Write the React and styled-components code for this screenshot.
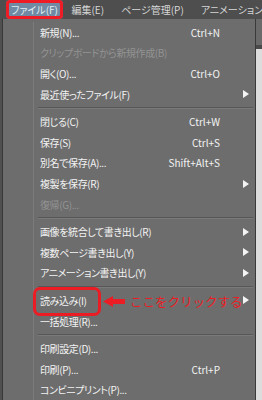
import React from "react";
import styled, { createGlobalStyle } from "styled-components";

const GlobalStyle = createGlobalStyle`
  html, body {
    margin: 0;
    padding: 0;
    background: #4c4c4c;
  }
  body {
    font-family: "Noto Sans CJK JP", "Noto Sans", sans-serif;
    font-feature-settings: "palt" 1;
  }
`;

const Screen = styled.div`
  width: 262px;
  height: 400px;
  overflow: hidden;
  display: flex;
  flex-direction: column;
  background: #4c4c4c;
`;

const MenuBar = styled.div`
  height: 19px;
  flex: none;
  display: flex;
  align-items: stretch;
  padding-left: 6px;
  background: #4e4e4e;
  white-space: nowrap;
  overflow: hidden;
`;

const BarItem = styled.div`
  display: flex;
  align-items: center;
  flex: none;
  padding: ${({ active }) => (active ? "0 5px" : "0 8.5px")};
  font-size: 10px;
  color: ${({ active }) => (active ? "#e4edf4" : "#d6d6d6")};
  background: ${({ active }) => (active ? "#6f8aa2" : "transparent")};
  border-radius: ${({ active }) => (active ? "4px" : "0")};
  box-shadow: ${({ active }) => (active ? "inset 0 0 0 3px #ee1c25" : "none")};
`;

const Body = styled.div`
  flex: 1;
  display: flex;
  min-height: 0;
`;

const LeftStrip = styled.div`
  width: 2px;
  flex: none;
  background: #505050;
  border-right: 1px solid #383838;
`;

const RightStrip = styled.div`
  flex: 1;
  border-left: 1px solid #3a3a3a;
  background: linear-gradient(#6a6a6a 0 26px, #4a4a4a 26px 30px, #dcdcdc 30px);
`;

const Menu = styled.div`
  width: 252px;
  flex: none;
  display: flex;
  background: #6d6d6d;
  padding-top: 3px;
`;

const Gutter = styled.div`
  width: 30px;
  flex: none;
  border-right: 1px solid #7b7b7b;
`;

const ItemList = styled.div`
  flex: 1;
  display: flex;
  flex-direction: column;
`;

const Row = styled.div`
  position: relative;
  height: 21px;
  display: grid;
  grid-template-columns: 1fr auto 35px;
  align-items: center;
  padding-left: 6px;
  font-size: 10px;
  white-space: nowrap;
  color: ${({ disabled }) => (disabled ? "#939393" : "#f3f3f3")};
`;

const Label = styled.span`
  letter-spacing: -0.4px;
`;

const Shortcut = styled.span`
  text-align: right;
`;

const ArrowCell = styled.span`
  display: flex;
  align-items: center;
  padding-left: 23px;
`;

const SubArrow = styled.span`
  width: 0;
  height: 0;
  border-top: 4.5px solid transparent;
  border-bottom: 4.5px solid transparent;
  border-left: 6px solid #f4f4f4;
`;

const Separator = styled.div`
  height: 7px;
  display: flex;
  align-items: center;
  padding: 0 2px 0 4px;

  &::before {
    content: "";
    flex: 1;
    height: 1px;
    background: #575757;
    border-bottom: 1px solid #7a7a7a;
  }
`;

const Callout = styled.div`
  position: absolute;
  left: -1px;
  top: -3px;
  display: flex;
  align-items: center;
  pointer-events: none;
`;

const CalloutBox = styled.div`
  width: 62px;
  height: 23px;
  border: 3px solid #ec1c24;
  border-radius: 7px;
`;

const CalloutText = styled.span`
  margin-left: 5px;
  font-size: 12.5px;
  color: #ec1c24;
  font-feature-settings: normal;
`;

const items = [
  { label: "新規(N)...", shortcut: "Ctrl+N" },
  { label: "クリップボードから新規作成(B)", disabled: true },
  { label: "開く(O)...", shortcut: "Ctrl+O" },
  { label: "最近使ったファイル(F)", sub: true },
  "sep",
  { label: "閉じる(C)", shortcut: "Ctrl+W" },
  { label: "保存(S)", shortcut: "Ctrl+S" },
  { label: "別名で保存(A)...", shortcut: "Shift+Alt+S" },
  { label: "複製を保存(R)", sub: true },
  { label: "復帰(G)...", disabled: true },
  "sep",
  { label: "画像を統合して書き出し(R)", sub: true },
  { label: "複数ページ書き出し(Y)", sub: true },
  { label: "アニメーション書き出し(Y)", sub: true },
  "sep",
  { label: "読み込み(I)", sub: true, callout: "ここをクリックする" },
  { label: "一括処理(R)..." },
  "sep",
  { label: "印刷設定(D)..." },
  { label: "印刷(P)...", shortcut: "Ctrl+P" },
  { label: "コンビニプリント(P)..." },
];

const menus = ["ファイル(F)", "編集(E)", "ページ管理(P)", "アニメーション(A)"];

const LeftArrow = () => (
  <svg width="22" height="11" viewBox="0 0 22 11" style={{ marginLeft: 2 }}>
    <polygon points="0,5.5 10,0 10,3 22,3 22,8 10,8 10,11" fill="#ec1c24" />
  </svg>
);

export default function App() {
  return (
    <>
      <GlobalStyle />
      <Screen>
        <MenuBar>
          {menus.map((m, i) => (
            <BarItem key={m} active={i === 0}>
              {m}
            </BarItem>
          ))}
        </MenuBar>
        <Body>
          <LeftStrip />
          <Menu>
            <Gutter />
            <ItemList>
              {items.map((it, i) =>
                it === "sep" ? (
                  <Separator key={i} />
                ) : (
                  <Row key={i} disabled={it.disabled}>
                    <Label>{it.label}</Label>
                    <Shortcut>{it.shortcut}</Shortcut>
                    <ArrowCell>{it.sub && <SubArrow />}</ArrowCell>
                    {it.callout && (
                      <Callout>
                        <CalloutBox />
                        <LeftArrow />
                        <CalloutText>{it.callout}</CalloutText>
                      </Callout>
                    )}
                  </Row>
                )
              )}
            </ItemList>
          </Menu>
          <RightStrip />
        </Body>
      </Screen>
    </>
  );
}
